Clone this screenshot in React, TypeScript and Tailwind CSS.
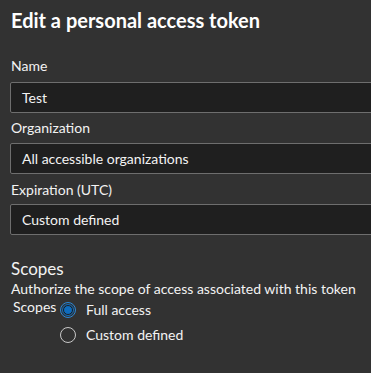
import React from "react";

function Field({ label, value, labelClass }: { label: string; value: string; labelClass: string }) {
  return (
    <div className="flex flex-col">
      <div className={`text-[14px] leading-[20px] text-[#f3f3f3] pl-[1px] ${labelClass}`}>{label}</div>
      <div className="h-[31px] w-[400px] border border-[#6e6e6e] bg-[#1f1f1f] rounded-[2px] flex items-center pl-[11px] text-[14px] text-[#f3f3f3]">
        {value}
      </div>
    </div>
  );
}

function Radio({ checked, label }: { checked?: boolean; label: string }) {
  return (
    <div className="flex items-center gap-[10px] h-[25px]">
      {checked ? (
        <div className="w-[16px] h-[16px] rounded-full border border-[#2b88d8] flex items-center justify-center">
          <div className="w-[10px] h-[10px] rounded-full bg-[#0f6cbd] border border-[#1a1a1a] outline outline-1 outline-[#0f6cbd]" />
        </div>
      ) : (
        <div className="w-[16px] h-[16px] rounded-full border border-[#c8c8c8]" />
      )}
      <span className="text-[14px] text-[#f3f3f3]">{label}</span>
    </div>
  );
}

export default function App() {
  return (
    <div
      className="w-[371px] h-[373px] bg-[#323232] overflow-hidden pl-[10px] pt-[6px]"
      style={{ fontFamily: 'Lato, "Noto Sans", sans-serif' }}
    >
      <div className="text-[20px] font-bold leading-[28px] text-white pl-[1px]">Edit a personal access token</div>
      <div className="mt-[22px]">
        <Field label="Name" value="Test" labelClass="mb-[6px]" />
      </div>
      <div className="mt-[5px]">
        <Field label="Organization" value="All accessible organizations" labelClass="mb-[5px]" />
      </div>
      <div className="mt-[6px]">
        <Field label="Expiration (UTC)" value="Custom defined" labelClass="mb-[4px]" />
      </div>
      <div className="mt-[24px] text-[17px] leading-[20px] text-[#f3f3f3] pl-[1px]">Scopes</div>
      <div className="text-[14px] leading-[20px] text-[#f3f3f3] pl-[1px]">
        Authorize the scope of access associated with this token
      </div>
      <div className="flex items-start -mt-[2px]">
        <div className="w-[50px] shrink-0 text-[14px] leading-[18px] text-[#f3f3f3] pl-[3px] mt-[1px]">Scopes</div>
        <div className="flex flex-col">
          <Radio checked label="Full access" />
          <Radio label="Custom defined" />
        </div>
      </div>
    </div>
  );
}
